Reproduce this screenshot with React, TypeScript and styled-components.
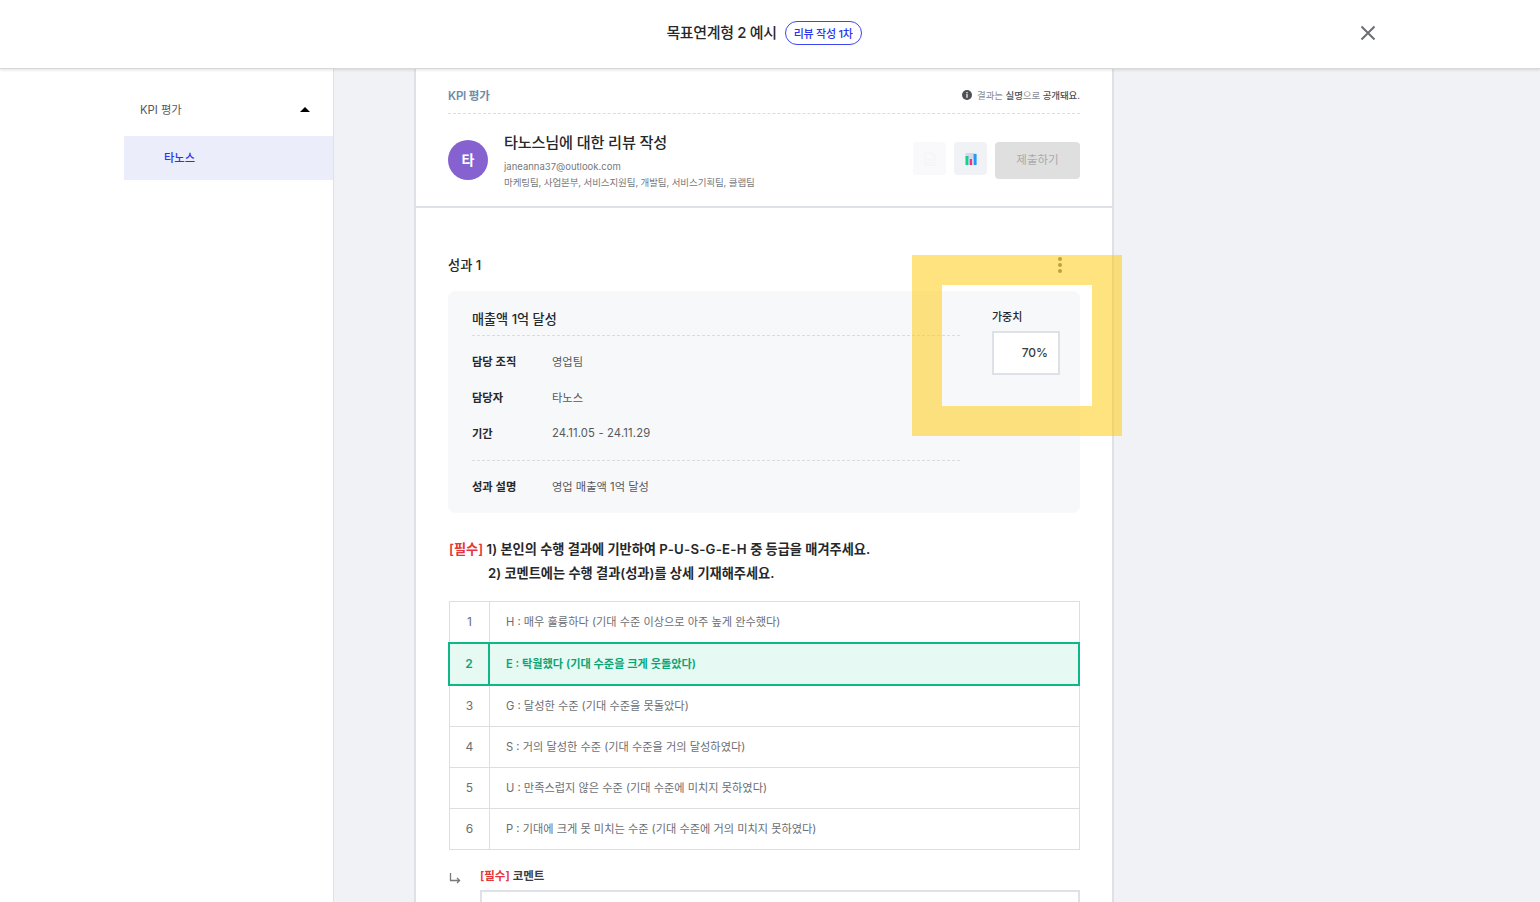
import React from "react";
import styled, { createGlobalStyle } from "styled-components";

const GlobalStyle = createGlobalStyle`
  html, body {
    margin: 0;
    padding: 0;
    height: 100%;
    overflow: hidden;
    background: #fff;
    font-family: "Inter", "Noto Sans CJK KR", sans-serif;
    color: #26282b;
  }
  * {
    box-sizing: border-box;
  }
`;

const Page = styled.div`
  height: 902px;
  display: flex;
  flex-direction: column;
  overflow: hidden;
`;

const Header = styled.header`
  position: relative;
  z-index: 2;
  height: 69px;
  flex-shrink: 0;
  background: #fff;
  border-bottom: 1px solid #d8d8d8;
  box-shadow: 0 1px 3px rgba(0, 0, 0, 0.12);
  display: flex;
  align-items: center;
  justify-content: center;
  gap: 8px;
  padding: 0 12px 2px 0;
`;

const HeaderTitle = styled.h1`
  margin: 0;
  font-size: 15px;
  line-height: 24px;
  font-weight: 500;
  letter-spacing: -0.35px;
  color: #26282b;
`;

const Badge = styled.span`
  height: 24px;
  padding: 0 8px;
  display: inline-flex;
  align-items: center;
  border: 1px solid #3d45f5;
  border-radius: 12px;
  font-size: 11px;
  font-weight: 500;
  letter-spacing: -0.28px;
  color: #2b35f0;
`;

const CloseButton = styled.button`
  position: absolute;
  left: 1360px;
  top: 25px;
  width: 16px;
  height: 16px;
  padding: 0;
  border: 0;
  background: none;
  display: flex;
  svg {
    display: block;
  }
`;

const Body = styled.div`
  flex: 1;
  display: flex;
  min-height: 0;
`;

const Sidebar = styled.aside`
  width: 334px;
  flex-shrink: 0;
  background: #fff;
  border-right: 1px solid #dee1e7;
  padding: 19px 0 0 124px;
`;

const NavGroup = styled.div`
  height: 48px;
  padding: 0 16px 6px;
  display: flex;
  align-items: center;
  justify-content: space-between;
  font-size: 11.25px;
  color: #55585c;
`;

const Caret = styled.span`
  width: 0;
  height: 0;
  border-left: 5px solid transparent;
  border-right: 5px solid transparent;
  border-bottom: 5px solid #000;
  margin-right: 7px;
`;

const NavItem = styled.div`
  height: 44px;
  padding: 0 0 2px 40px;
  display: flex;
  align-items: center;
  background: #ebedfb;
  font-size: 11.25px;
  font-weight: 500;
  color: #2b35f0;
`;

const Main = styled.main`
  flex: 1;
  background: #f1f2f5;
  padding-left: 80px;
  min-width: 0;
`;

const Card = styled.div`
  position: relative;
  width: 700px;
  min-height: 900px;
  background: #fff;
  border-left: 2px solid #dee1e7;
  border-right: 2px solid #dee1e7;
`;

const CardTop = styled.div`
  padding: 0 32px;
  border-bottom: 2px solid #dee1e7;
  height: 139px;
`;

const MetaRow = styled.div`
  height: 45px;
  padding-top: 8px;
  display: flex;
  align-items: center;
  justify-content: space-between;
  border-bottom: 1px dashed #dcdcdc;
`;

const MetaLabel = styled.span`
  font-size: 11.5px;
  font-weight: 600;
  letter-spacing: -0.2px;
  color: #6f8ba8;
`;

const Notice = styled.span`
  display: flex;
  align-items: center;
  gap: 5px;
  font-size: 9.5px;
  letter-spacing: -0.1px;
  color: #8a8d91;
  b {
    font-weight: 500;
    color: #4d5055;
  }
`;

const Reviewee = styled.div`
  display: flex;
  justify-content: space-between;
  padding-top: 17px;
`;

const Person = styled.div`
  display: flex;
  gap: 16px;
  align-items: flex-start;
`;

const Avatar = styled.div`
  width: 40px;
  height: 40px;
  margin-top: 9px;
  padding-bottom: 3px;
  border-radius: 50%;
  background: #8662d0;
  color: #fff;
  font-size: 14px;
  font-weight: 600;
  display: flex;
  align-items: center;
  justify-content: center;
`;

const PersonText = styled.div`
  display: flex;
  flex-direction: column;
`;

const PersonName = styled.div`
  font-size: 15.2px;
  line-height: 24px;
  font-weight: 500;
  letter-spacing: -0.2px;
  color: #26282b;
  margin-bottom: 4px;
`;

const PersonLine = styled.div`
  font-size: 9.5px;
  line-height: 16px;
  letter-spacing: -0.1px;
  color: #76797e;
`;

const PersonEmail = styled(PersonLine)`
  letter-spacing: 0;
`;

const Actions = styled.div`
  display: flex;
  gap: 8px;
  align-items: flex-start;
  padding-top: 11px;
`;

const IconButton = styled.button<{ $faded?: boolean }>`
  width: 33px;
  height: 33px;
  border: 0;
  padding: 0;
  border-radius: 4px;
  background: ${(p) => (p.$faded ? "#f9f9fb" : "#f1f2f5")};
  display: flex;
  align-items: center;
  justify-content: center;
`;

const SubmitButton = styled.button`
  width: 85px;
  height: 37px;
  border: 0;
  padding: 0 0 3px;
  border-radius: 4px;
  background: #dfdfdf;
  color: #aaaaaa;
  font-family: inherit;
  font-size: 11.5px;
`;

const Section = styled.section`
  padding: 45px 32px 0;
`;

const SectionHead = styled.div`
  height: 24px;
  display: flex;
  align-items: center;
  justify-content: space-between;
  padding-right: 18px;
  margin-bottom: 14px;
`;

const SectionTitle = styled.h2`
  margin: 0 0 2px;
  font-size: 13.2px;
  font-weight: 500;
  color: #26282b;
`;

const Kebab = styled.span`
  display: flex;
  flex-direction: column;
  gap: 2px;
  i {
    width: 4px;
    height: 4px;
    border-radius: 50%;
    background: #7a7d82;
  }
`;

const GoalBox = styled.div`
  height: 222px;
  padding: 16px 20px 0 24px;
  display: flex;
  gap: 32px;
  background: #f7f8fa;
  border-radius: 8px;
`;

const GoalInfo = styled.div`
  flex: 1;
`;

const GoalTitle = styled.div`
  height: 29px;
  font-size: 13.1px;
  line-height: 24px;
  font-weight: 500;
  border-bottom: 1px dashed #dcdcdc;
  color: #26282b;
`;

const GoalRows = styled.div`
  padding-top: 7px;
  height: 125px;
  border-bottom: 1px dashed #dcdcdc;
`;

const GoalRow = styled.div`
  height: 36px;
  display: flex;
  align-items: center;
  font-size: 11.25px;
`;

const GoalKey = styled.span`
  width: 80px;
  font-weight: 600;
  color: #26282b;
`;

const GoalValue = styled.span`
  color: #55585c;
`;

const GoalDate = styled(GoalValue)`
  letter-spacing: 0.15px;
`;

const GoalNote = styled(GoalRow)`
  margin-top: 7px;
`;

const Weight = styled.div`
  width: 68px;
  padding-top: 1px;
`;

const WeightLabel = styled.div`
  font-size: 11px;
  line-height: 18px;
  font-weight: 500;
  margin-bottom: 5px;
  color: #26282b;
`;

const WeightField = styled.div`
  height: 44px;
  padding: 0 10px 2px 0;
  display: flex;
  align-items: center;
  justify-content: flex-end;
  background: #fff;
  border: 2px solid #dee1e7;
  font-size: 12px;
  font-weight: 500;
  color: #3a3d42;
`;

const Instruction = styled.p`
  margin: 24px 0 16px 1px;
  font-size: 13.2px;
  line-height: 24px;
  font-weight: 600;
  color: #26282b;
`;

const Required = styled.span`
  color: #e8343c;
`;

const GradeCode = styled.span`
  letter-spacing: 0.25px;
`;

const InstructionIndent = styled.span`
  display: block;
  padding-left: 39px;
`;

const GradeTable = styled.div`
  margin-left: 1px;
  border: 1px solid #dedede;
  border-bottom-width: 0;
`;

const GradeRow = styled.div<{ $selected?: boolean }>`
  display: flex;
  height: ${(p) => (p.$selected ? "44px" : "41px")};
  margin: ${(p) => (p.$selected ? "-1px -1px 0 -2px" : "0")};
  border: ${(p) => (p.$selected ? "2px solid #10b786" : "none")};
  border-bottom: ${(p) =>
    p.$selected ? "2px solid #10b786" : "1px solid #dedede"};
  background: ${(p) => (p.$selected ? "#e6faf3" : "#fff")};
  color: ${(p) => (p.$selected ? "#0aa577" : "#6b6e73")};
  font-size: 11.2px;
  font-weight: ${(p) => (p.$selected ? 600 : 400)};
`;

const GradeNumber = styled.div<{ $selected?: boolean }>`
  width: 40px;
  padding-bottom: 1px;
  border-right: ${(p) =>
    p.$selected ? "2px solid #10b786" : "1px solid #dedede"};
  display: flex;
  align-items: center;
  justify-content: center;
  font-size: 12px;
`;

const GradeText = styled.div`
  padding: 0 0 3px 16px;
  display: flex;
  align-items: center;
`;

const CommentHead = styled.div`
  display: flex;
  align-items: center;
  gap: 19px;
  height: 24px;
  margin: 13px 0 3px 1px;
  svg {
    margin-top: 6px;
  }
`;

const CommentLabel = styled.span`
  font-size: 11.5px;
  font-weight: 600;
  color: #3a3d42;
`;

const CommentField = styled.div`
  margin-left: 32px;
  height: 60px;
  border: 2px solid #dee1e7;
  background: #fff;
`;

const Spotlight = styled.div`
  position: absolute;
  left: 912px;
  top: 255px;
  width: 210px;
  height: 181px;
  border: 30px solid rgba(255, 200, 0, 0.5);
  pointer-events: none;
  z-index: 3;
`;

const grades = [
  "H : 매우 훌륭하다 (기대 수준 이상으로 아주 높게 완수했다)",
  "E : 탁월했다 (기대 수준을 크게 웃돌았다)",
  "G : 달성한 수준 (기대 수준을 못돌았다)",
  "S : 거의 달성한 수준 (기대 수준을 거의 달성하였다)",
  "U : 만족스럽지 않은 수준 (기대 수준에 미치지 못하였다)",
  "P : 기대에 크게 못 미치는 수준 (기대 수준에 거의 미치지 못하였다)",
];

const CloseIcon = () => (
  <svg width="16" height="16" viewBox="0 0 16 16" fill="none">
    <path d="M1.5 1.5 14.5 14.5M14.5 1.5 1.5 14.5" stroke="#6b6e73" strokeWidth="2" />
  </svg>
);

const InfoIcon = () => (
  <svg width="10" height="10" viewBox="0 0 10 10">
    <circle cx="5" cy="5" r="5" fill="#4d5055" />
    <rect x="4.4" y="2" width="1.2" height="1.3" fill="#fff" />
    <rect x="4.4" y="4" width="1.2" height="3.8" fill="#fff" />
  </svg>
);

const DocIcon = () => (
  <svg width="12" height="14" viewBox="0 0 12 14" fill="none">
    <path d="M1 1h7l3 3v9H1z" stroke="#f3f3f6" strokeWidth="1.2" />
    <path d="M3 8h6M3 10.5h6" stroke="#f3f3f6" />
  </svg>
);

const ChartIcon = () => (
  <svg width="12" height="12" viewBox="0 0 12 12">
    <rect x="0.5" width="10" height="6" fill="#ddd4ea" />
    <rect x="0.5" y="3" width="3" height="9" fill="#12d08e" />
    <rect x="4.6" y="6" width="2.6" height="6" fill="#f0308c" />
    <rect x="8.6" y="1" width="3" height="11" fill="#1e9bf5" />
  </svg>
);

const ReplyArrow = () => (
  <svg width="12" height="12" viewBox="0 0 12 12" fill="none">
    <path d="M1.5 1v7.5h9M8 6l2.6 2.5L8 11" stroke="#77797d" strokeWidth="1.3" />
  </svg>
);

export default function App() {
  return (
    <Page>
      <GlobalStyle />
      <Header>
        <HeaderTitle>목표연계형 2 예시</HeaderTitle>
        <Badge>리뷰 작성 1차</Badge>
        <CloseButton aria-label="닫기">
          <CloseIcon />
        </CloseButton>
      </Header>
      <Body>
        <Sidebar>
          <NavGroup>
            KPI 평가
            <Caret />
          </NavGroup>
          <NavItem>타노스</NavItem>
        </Sidebar>
        <Main>
          <Card>
            <CardTop>
              <MetaRow>
                <MetaLabel>KPI 평가</MetaLabel>
                <Notice>
                  <InfoIcon />
                  <span>
                    결과는 <b>실명</b>으로 <b>공개돼요.</b>
                  </span>
                </Notice>
              </MetaRow>
              <Reviewee>
                <Person>
                  <Avatar>타</Avatar>
                  <PersonText>
                    <PersonName>타노스님에 대한 리뷰 작성</PersonName>
                    <PersonEmail>janeanna37@outlook.com</PersonEmail>
                    <PersonLine>
                      마케팅팀, 사업본부, 서비스지원팀, 개발팀, 서비스기획팀, 클랩팀
                    </PersonLine>
                  </PersonText>
                </Person>
                <Actions>
                  <IconButton $faded>
                    <DocIcon />
                  </IconButton>
                  <IconButton>
                    <ChartIcon />
                  </IconButton>
                  <SubmitButton>제출하기</SubmitButton>
                </Actions>
              </Reviewee>
            </CardTop>
            <Section>
              <SectionHead>
                <SectionTitle>성과 1</SectionTitle>
                <Kebab>
                  <i />
                  <i />
                  <i />
                </Kebab>
              </SectionHead>
              <GoalBox>
                <GoalInfo>
                  <GoalTitle>매출액 1억 달성</GoalTitle>
                  <GoalRows>
                    <GoalRow>
                      <GoalKey>담당 조직</GoalKey>
                      <GoalValue>영업팀</GoalValue>
                    </GoalRow>
                    <GoalRow>
                      <GoalKey>담당자</GoalKey>
                      <GoalValue>타노스</GoalValue>
                    </GoalRow>
                    <GoalRow>
                      <GoalKey>기간</GoalKey>
                      <GoalDate>24.11.05 - 24.11.29</GoalDate>
                    </GoalRow>
                  </GoalRows>
                  <GoalNote>
                    <GoalKey>성과 설명</GoalKey>
                    <GoalValue>영업 매출액 1억 달성</GoalValue>
                  </GoalNote>
                </GoalInfo>
                <Weight>
                  <WeightLabel>가중치</WeightLabel>
                  <WeightField>70%</WeightField>
                </Weight>
              </GoalBox>
              <Instruction>
                <Required>[필수]</Required> 1) 본인의 수행 결과에 기반하여 <GradeCode>P-U-S-G-E-H</GradeCode> 중 등급을 매겨주세요.
                <InstructionIndent>
                  2) 코멘트에는 수행 결과(성과)를 상세 기재해주세요.
                </InstructionIndent>
              </Instruction>
              <GradeTable>
                {grades.map((g, i) => (
                  <GradeRow key={g} $selected={i === 1}>
                    <GradeNumber $selected={i === 1}>{i + 1}</GradeNumber>
                    <GradeText>{g}</GradeText>
                  </GradeRow>
                ))}
              </GradeTable>
              <CommentHead>
                <ReplyArrow />
                <CommentLabel>
                  <Required>[필수]</Required> 코멘트
                </CommentLabel>
              </CommentHead>
              <CommentField />
            </Section>
          </Card>
        </Main>
      </Body>
      <Spotlight />
    </Page>
  );
}
